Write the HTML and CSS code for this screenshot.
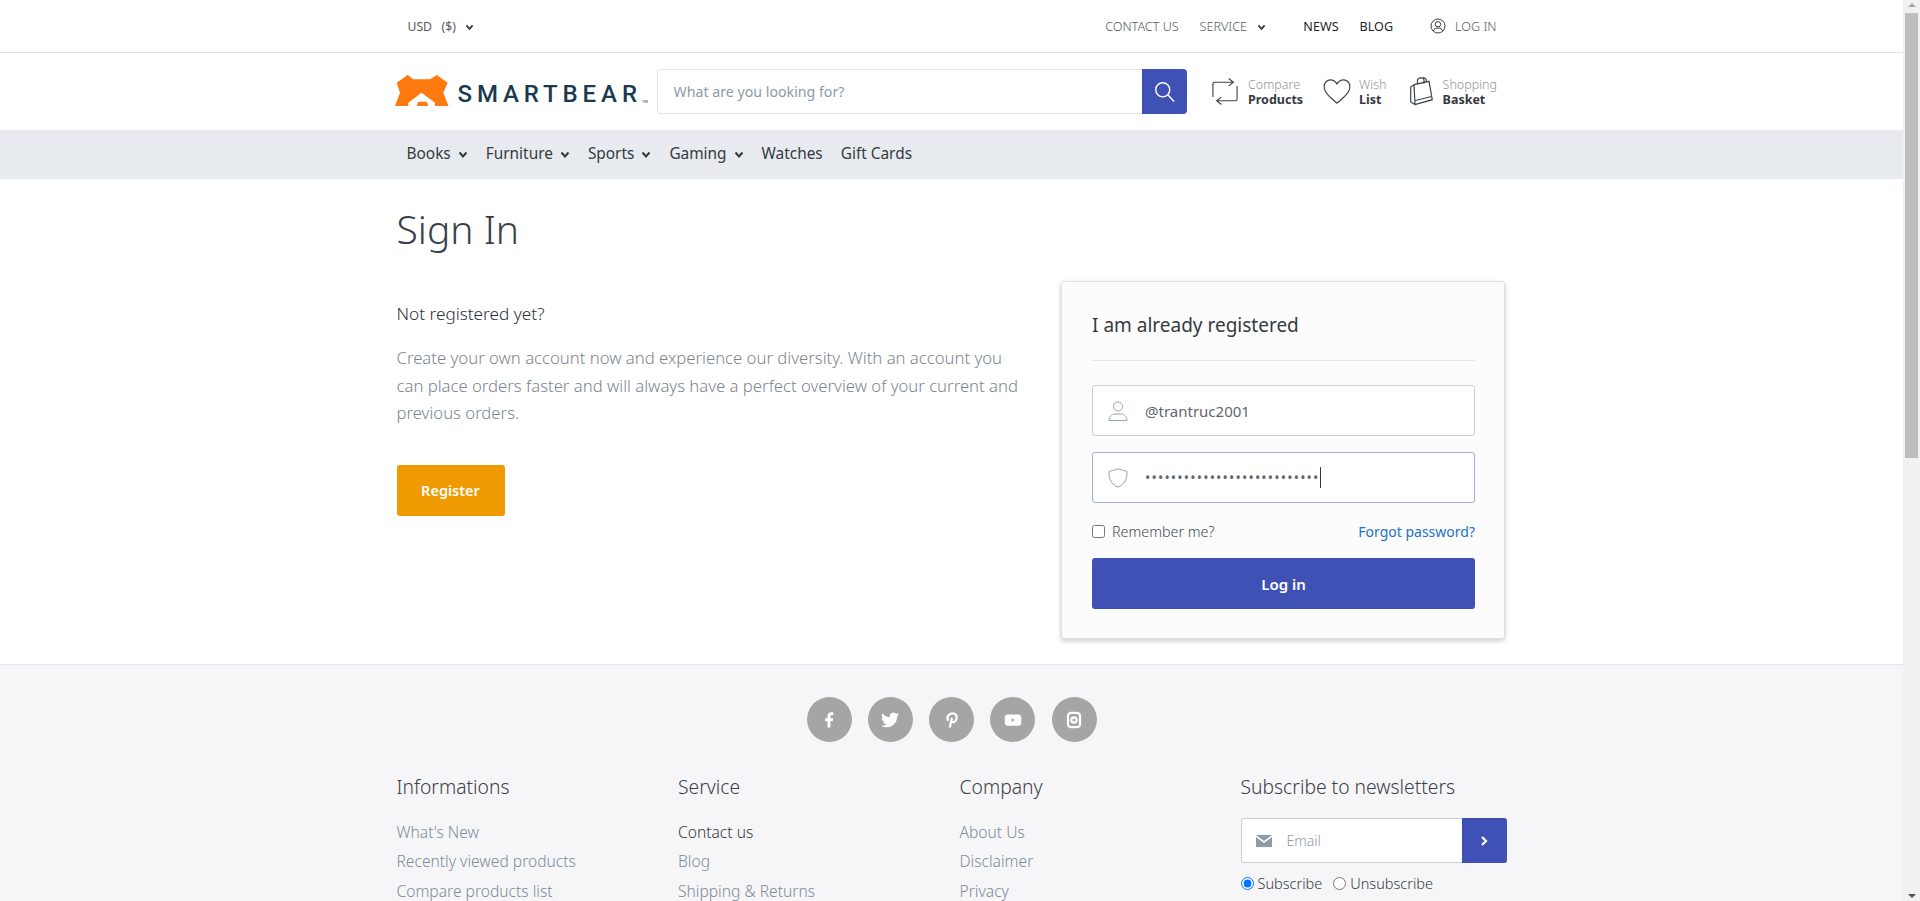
FILE: index.html
```html
<!DOCTYPE html>
<html lang="en">

<head>
    <title>Sign In</title>
    <meta charset="utf-8">
    <meta name="viewport" content="width=device-width, initial-scale=1">
    <link rel="stylesheet" href="styles.css">
</head>

<body>
    <div class="page">
        <div class="topbar">
            <div class="container topbar-row">
                <div class="currency">USD&nbsp;&nbsp;&nbsp;($) <svg class="chev" viewBox="0 0 10 8"><path d="M1.5 1.5 5 5.5l3.5-4"/></svg></div>
                <nav class="toplinks">
                    <a href="#">Contact us</a>
                    <a href="#" class="service">Service <svg class="chev" viewBox="0 0 10 8"><path d="M1.5 1.5 5 5.5l3.5-4"/></svg></a>
                    <a href="#" class="dark news">News</a>
                    <a href="#" class="dark">Blog</a>
                    <a href="#" class="login">
                        <svg class="login-icon" viewBox="0 0 16 16"><circle cx="8" cy="8" r="7"/><circle cx="8" cy="6.3" r="2.7"/><path d="M3.2 13c.8-2.2 2.6-3 4.8-3s4 .8 4.8 3"/></svg>
                        Log in
                    </a>
                </nav>
            </div>
        </div>

        <header class="header">
            <div class="container header-row">
                <a href="#" class="logo">
                    <svg class="bear" viewBox="0 0 54 31"><path fill-rule="evenodd" d="M0 31 5 17.7 1.7 7.7 12.7 0l5.6 4.3H35L41.7 0l11 7.7-4.4 10L53.5 31H40v-3.3L26.5 17.7 13.3 27.7V31zM21.7 31l1.6-4.3h8.4l1.6 4.3z"/></svg>
                    <span class="logo-text">SMARTBEAR</span><span class="tm">TM</span>
                </a>
                <form class="search">
                    <input class="search-input" type="text" placeholder="What are you looking for?">
                    <button class="search-btn" type="button" aria-label="Search">
                        <svg viewBox="0 0 24 24"><circle cx="10" cy="10" r="8"/><path d="m16 16 7 7.5"/></svg>
                    </button>
                </form>
                <div class="shortcuts">
                    <a href="#" class="shortcut compare">
                        <svg viewBox="0 0 28 30"><path d="M22 5H3a2 2 0 0 0-2 2v14M6 25h19a2 2 0 0 0 2-2V9M18 1l5 4-5 4M10 21l-5 4 5 4"/></svg>
                        <span><small>Compare</small><b>Products</b></span>
                    </a>
                    <a href="#" class="shortcut wish">
                        <svg viewBox="0 0 30 28"><path d="M15 26.5C9 21.5 1.2 15.5 1.2 8.6 1.2 4.6 4.3 1.5 8 1.5c3 0 5.6 1.7 7 4.5 1.4-2.8 4-4.5 7-4.5 3.7 0 6.8 3.1 6.8 7.1 0 6.9-7.8 12.900-13.800 17.900z"/></svg>
                        <span><small>Wish</small><b>List</b></span>
                    </a>
                    <a href="#" class="shortcut basket">
                        <svg viewBox="0 0 23 29"><path d="M4 7.7 19 4.3l3.300 18.400L5 27.700.7 25V10zM4 7.700l1 20M5.500 23.500l16-4M7.500 7V3c1-3 6-3 6.500 0v3.500M10 1.500c3-1.500 6-.5 6.200 1.500l.5 2.500"/></svg>
                        <span><small>Shopping</small><b>Basket</b></span>
                    </a>
                </div>
            </div>
        </header>

        <div class="menu">
            <ul class="container menu-list">
                <li><a href="#">Books <svg class="chev" viewBox="0 0 10 8"><path d="M1.5 1.5 5 5.5l3.5-4"/></svg></a></li>
                <li><a href="#">Furniture <svg class="chev" viewBox="0 0 10 8"><path d="M1.5 1.5 5 5.5l3.5-4"/></svg></a></li>
                <li><a href="#">Sports <svg class="chev" viewBox="0 0 10 8"><path d="M1.5 1.5 5 5.5l3.5-4"/></svg></a></li>
                <li><a href="#">Gaming <svg class="chev" viewBox="0 0 10 8"><path d="M1.5 1.5 5 5.5l3.5-4"/></svg></a></li>
                <li><a href="#">Watches</a></li>
                <li><a href="#">Gift Cards</a></li>
            </ul>
        </div>

        <main class="container main">
            <h1>Sign In</h1>
            <div class="columns">
                <section class="register">
                    <h2>Not registered yet?</h2>
                    <p>Create your own account now and experience our diversity. With an account you can place orders faster and will always have a perfect overview of your current and previous orders.</p>
                    <a href="#" class="register-btn">Register</a>
                </section>

                <section class="card">
                    <h3>I am already registered</h3>
                    <label class="field">
                        <svg viewBox="0 0 20 20"><circle cx="10" cy="5.5" r="4.5"/><path d="M1 19.5c0-4 3-6.5 5.500-6.500h7c2.500 0 5.500 2.500 5.500 6.500z"/></svg>
                        <input type="text" value="@trantruc2001">
                    </label>
                    <div class="field focused">
                        <svg viewBox="0 0 20 20"><path d="M10 .8 19 3.500c.3 7.500-2.500 13-9 15.700C3.500 16.500.7 11 1 3.500z"/></svg>
                        <span class="dots">•••••••••••••••••••••••••••</span><span class="caret"></span>
                    </div>
                    <div class="options">
                        <label class="remember"><input type="checkbox"> Remember me?</label>
                        <a href="#" class="forgot">Forgot password?</a>
                    </div>
                    <button class="login-btn" type="button">Log in</button>
                </section>
            </div>
        </main>

        <footer class="footer">
            <div class="socials">
                <a href="#" aria-label="Facebook"><svg viewBox="0 0 24 24"><path d="M14 13.500h3l.6-4H14V7.200c0-1.100.5-1.900 2-1.900h1.700V1.900C17.200 1.800 16 1.700 14.900 1.700 12 1.700 10 3.500 10 6.700v2.800H6.800v4H10V22h4z"/></svg></a>
                <a href="#" aria-label="Twitter"><svg viewBox="0 0 24 24"><path d="M23.953 4.570a10 10 0 01-2.825.775 4.958 4.958 0 002.163-2.723c-.951.555-2.005.959-3.127 1.184a4.920 4.920 0 00-8.384 4.482C7.690 8.095 4.067 6.130 1.640 3.162a4.822 4.822 0 00-.666 2.475c0 1.710.870 3.213 2.188 4.096a4.904 4.904 0 01-2.228-.616v.060a4.923 4.923 0 003.946 4.827 4.996 4.996 0 01-2.212.085 4.936 4.936 0 004.604 3.417 9.867 9.867 0 01-6.102 2.105c-.390 0-.779-.023-1.170-.067a13.995 13.995 0 007.557 2.209c9.053 0 13.998-7.496 13.998-13.985 0-.210 0-.420-.015-.630A9.935 9.935 0 0024 4.590z"/></svg></a>
                <a href="#" aria-label="Pinterest"><svg viewBox="0 0 24 24"><path class="line" d="M9 22l3-13M7 13c-3-5 1-10 5.500-10S19 6 18 10s-4 6-6.500 4"/></svg></a>
                <a href="#" aria-label="YouTube"><svg viewBox="0 0 24 24"><path fill-rule="evenodd" d="M5 4.500h14a4 4 0 0 1 4 4v7a4 4 0 0 1-4 4H5a4 4 0 0 1-4-4v-7a4 4 0 0 1 4-4zM10 9.500v5l4.500-2.500z"/></svg></a>
                <a href="#" aria-label="Instagram"><svg viewBox="0 0 24 24"><rect class="line" x="4" y="2.500" width="16" height="19" rx="4"/><circle class="line" cx="12" cy="12" r="3.500"/></svg></a>
            </div>
            <div class="container footer-cols">
                <div class="footer-col">
                    <h4>Informations</h4>
                    <a href="#">What's New</a>
                    <a href="#">Recently viewed products</a>
                    <a href="#">Compare products list</a>
                </div>
                <div class="footer-col">
                    <h4>Service</h4>
                    <a href="#" class="active">Contact us</a>
                    <a href="#">Blog</a>
                    <a href="#">Shipping &amp; Returns</a>
                </div>
                <div class="footer-col">
                    <h4>Company</h4>
                    <a href="#">About Us</a>
                    <a href="#">Disclaimer</a>
                    <a href="#">Privacy</a>
                </div>
                <div class="footer-col subscribe">
                    <h4>Subscribe to newsletters</h4>
                    <form class="newsletter">
                        <svg viewBox="0 0 16 12"><path d="M0 0h16L8 6z"/><path d="M0 2v10h16V2L8 8z"/></svg>
                        <input type="text" placeholder="Email">
                        <button type="button" aria-label="Subscribe"><svg viewBox="0 0 10 12"><path d="M3 2l4 4-4 4"/></svg></button>
                    </form>
                    <div class="radios">
                        <label><input type="radio" name="sub" checked> Subscribe</label>
                        <label><input type="radio" name="sub"> Unsubscribe</label>
                    </div>
                </div>
            </div>
        </footer>
    </div>

    <div class="scrollbar">
        <span class="arrow-up"></span>
        <div class="track"><div class="thumb"></div></div>
        <span class="arrow-down"></span>
    </div>
</body>

</html>
```

FILE: styles.css
```css
* {
    box-sizing: border-box;
}

html,
body {
    height: 100%;
    margin: 0;
    overflow: hidden;
}

body {
    display: flex;
    font-family: "Noto Sans", "Open Sans", Arial, sans-serif;
    font-size: 15px;
    color: #343a40;
    background: #fff;
}

a {
    color: inherit;
    text-decoration: none;
}

.page {
    flex: 1;
    min-width: 0;
    overflow: hidden;
}

.container {
    width: 1110px;
    margin: 0 auto;
}

.chev {
    width: 9px;
    height: 7px;
    fill: none;
    stroke: currentColor;
    stroke-width: 2;
}

/* Top bar */
.topbar {
    height: 53px;
    border-bottom: 1px solid #dee2e6;
    font-size: 12.6px;
}

.topbar-row {
    display: flex;
    justify-content: space-between;
    align-items: center;
    height: 52px;
    padding: 0 10px 0 11px;
    color: #555b62;
}

.currency {
    font-size: 12.2px;
}

.currency .chev {
    margin-left: 6px;
    color: #343a40;
}

.toplinks {
    display: flex;
    align-items: center;
    font-weight: 300;
    text-transform: uppercase;
}

.toplinks a {
    margin-left: 21px;
}

.toplinks .service .chev {
    margin-left: 7px;
    color: #343a40;
}

.toplinks .news {
    margin-left: 37px;
}

.toplinks .dark {
    color: #212529;
    font-weight: 400;
}

.toplinks .login {
    display: flex;
    align-items: center;
    margin-left: 37px;
}

.login-icon {
    width: 16px;
    height: 16px;
    margin-right: 9px;
    fill: none;
    stroke: #343a40;
}

/* Header */
.header-row {
    display: flex;
    align-items: center;
    height: 77px;
}

.logo {
    display: flex;
    align-items: flex-end;
    width: 262px;
    margin-left: -2px;
    padding-bottom: 3px;
}

.bear {
    width: 54px;
    height: 31px;
    fill: #ff7a0e;
}

.logo-text {
    margin-left: 9px;
    margin-bottom: -1px;
    font-family: "Roboto", sans-serif;
    font-size: 24px;
    font-weight: 500;
    line-height: 25px;
    letter-spacing: 4.9px;
    color: #1b3a4f;
}

.tm {
    font-size: 4px;
    line-height: 8px;
    color: #1b3a4f;
}

.search {
    display: flex;
    width: 530.5px;
    height: 45px;
    margin-top: -1px;
    border: 1px solid #e2e4e8;
    border-radius: 4px;
}

.search-input {
    flex: 1;
    min-width: 0;
    padding: 0 16px;
    border: 0;
    outline: 0;
    background: none;
    font: inherit;
    font-size: 14.2px;
}

.search-input::placeholder,
.newsletter input::placeholder {
    color: #8e99a8;
    opacity: 1;
}

.search-btn {
    width: 45px;
    margin: -1px;
    padding: 0;
    border: 0;
    border-radius: 0 4px 4px 0;
    background: #3f51b5;
}

.search-btn svg {
    width: 21px;
    height: 21px;
    fill: none;
    stroke: #fff;
    stroke-width: 1.6;
    vertical-align: middle;
}

.shortcuts {
    display: flex;
    align-items: center;
    margin-left: 25px;
}

.shortcut {
    display: flex;
    align-items: center;
    font-size: 12.5px;
    line-height: 14.5px;
}

.shortcut span {
    display: flex;
    flex-direction: column;
    margin-top: 2px;
    margin-left: 8px;
}

.shortcut small {
    font-size: 12.5px;
    font-weight: 300;
    color: #8f949a;
}

.shortcut b {
    font-weight: 700;
}

.shortcut svg {
    fill: none;
    stroke: #3d434a;
    stroke-width: 1.2;
}

.compare svg {
    width: 26px;
    height: 29px;
}

.compare span,
.basket span {
    margin-left: 10px;
}

.wish {
    margin-left: 20px;
}

.wish svg {
    width: 28px;
    height: 27px;
}

.basket {
    margin-left: 23px;
}

.basket svg {
    width: 23px;
    height: 29px;
}

/* Category menu */
.menu {
    height: 49px;
    background: #e7eaef;
}

.menu-list {
    display: flex;
    align-items: center;
    gap: 18px;
    height: 49px;
    padding: 0 10px 2px;
    list-style: none;
    font-size: 15.4px;
    color: #343a40;
}

.menu-list .chev {
    width: 10px;
    height: 8px;
    margin-left: 3px;
}

/* Main */
.main {
    height: 485px;
    padding-top: 25px;
}

h1 {
    margin: 0;
    font-size: 39px;
    font-weight: 300;
    line-height: 50px;
    color: #3a4047;
}

.columns {
    display: flex;
    justify-content: space-between;
    margin-top: 27px;
}

.register {
    width: 630px;
    padding-top: 21px;
}

h2 {
    margin: 0;
    font-size: 17.2px;
    font-weight: 300;
    line-height: 24px;
    color: #2b3036;
}

.register p {
    margin: 18px 0 0;
    font-size: 16.7px;
    font-weight: 300;
    line-height: 27.5px;
    color: #7c8590;
}

.register-btn {
    display: inline-block;
    width: 108px;
    height: 51px;
    margin-top: 38px;
    border-radius: 3px;
    background: #ef9a00;
    color: #fff;
    font-size: 14.5px;
    font-weight: 600;
    line-height: 51px;
    text-align: center;
}

.card {
    width: 444px;
    height: 358px;
    margin-right: 1.5px;
    padding: 0 29px 0 30px;
    border: 1px solid #dcdfe3;
    border-radius: 3px;
    background: #fcfcfc;
    box-shadow: 0 2px 5px rgba(0, 0, 0, .2);
}

h3 {
    height: 79px;
    margin: 0 0 24px;
    border-bottom: 1px solid #e3e5e8;
    font-size: 19px;
    font-weight: 400;
    line-height: 86px;
}

.field {
    display: flex;
    align-items: center;
    height: 51px;
    margin-bottom: 16px;
    padding-left: 15px;
    border: 1px solid #c9ced6;
    border-radius: 3px;
    background: #fff;
    font-size: 15px;
    color: #5f666e;
}

.field svg {
    flex: none;
    width: 20px;
    height: 20px;
    fill: none;
    stroke: #98a4b3;
}

.field input {
    flex: 1;
    min-width: 0;
    margin-left: 17px;
    padding: 0;
    border: 0;
    outline: 0;
    background: none;
    font: inherit;
    color: inherit;
}

.field.focused {
    border-color: #a3aee0;
}

.dots {
    margin-left: 17px;
    font-size: 14px;
    letter-spacing: 1.2px;
}

.caret {
    width: 1px;
    height: 21px;
    background: #343a40;
}

.options {
    display: flex;
    justify-content: space-between;
    align-items: center;
    height: 24px;
    font-size: 14px;
}

.remember {
    display: flex;
    align-items: center;
    font-size: 14.3px;
    font-weight: 300;
    color: #444a51;
}

.remember input {
    width: 13px;
    height: 13px;
    margin: 0 7px 0 0;
}

.forgot {
    color: #1a73c4;
}

.login-btn {
    display: block;
    width: 100%;
    height: 51px;
    margin-top: 15px;
    border: 0;
    border-radius: 3px;
    background: #3f51b5;
    color: #fff;
    font: inherit;
    font-size: 15px;
    font-weight: 600;
}

/* Footer */
.footer {
    height: 300px;
    border-top: 1px solid #e3e5e8;
    background: #f6f6f8;
}

.socials {
    display: flex;
    justify-content: center;
    gap: 16.25px;
    padding-top: 32px;
}

.socials a {
    display: flex;
    align-items: center;
    justify-content: center;
    width: 45px;
    height: 45px;
    border-radius: 50%;
    background: #a5a5a5;
}

.socials svg {
    width: 18px;
    height: 18px;
    fill: #fff;
}

.socials .line {
    fill: none;
    stroke: #fff;
    stroke-width: 3;
}

.footer-cols {
    display: grid;
    grid-template-columns: 281.5px 281.5px 281px 266px;
    margin-top: 31px;
}

.footer-col a {
    display: block;
    font-size: 15.6px;
    font-weight: 300;
    line-height: 29.4px;
    color: #7e8a99;
}

.footer-col a.active {
    color: #343a40;
}

h4 {
    margin: 0 0 17px;
    font-size: 19.3px;
    font-weight: 300;
    line-height: 28px;
    color: #3a4047;
}

.newsletter {
    display: flex;
    align-items: center;
    height: 45px;
    padding-left: 14px;
    border: 1px solid #c9ced6;
    border-right: 0;
    border-radius: 3px;
    background: #fff;
}

.newsletter > svg {
    flex: none;
    width: 16px;
    height: 12px;
    fill: #8e99a8;
}

.newsletter input {
    flex: 1;
    min-width: 0;
    margin-left: 15px;
    padding: 0;
    border: 0;
    outline: 0;
    background: none;
    font: inherit;
    font-size: 14px;
    font-weight: 300;
}

.newsletter button {
    flex: none;
    width: 45px;
    height: 45px;
    margin: -1px 0;
    padding: 0;
    border: 0;
    border-radius: 0 3px 3px 0;
    background: #3f51b5;
}

.newsletter button svg {
    width: 10px;
    height: 12px;
    fill: none;
    stroke: #fff;
    stroke-width: 2.2;
    vertical-align: middle;
}

.radios {
    display: flex;
    gap: 11px;
    margin-top: 10px;
    font-size: 14.5px;
    font-weight: 300;
}

.radios label {
    display: flex;
    align-items: center;
    gap: 4px;
}

.radios input {
    width: 13px;
    height: 13px;
    margin: 0;
}

/* Scrollbar column, the window's own is not in the picture */
.scrollbar {
    display: flex;
    flex: none;
    flex-direction: column;
    align-items: center;
    width: 17px;
    background: #f1f1f1;
}

.track {
    flex: 1;
    width: 13px;
    padding-top: 3px;
}

.thumb {
    height: 445px;
    background: #bebebe;
}

.arrow-up,
.arrow-down {
    flex: none;
    width: 0;
    height: 0;
    margin: 3px 0;
    border-left: 4px solid transparent;
    border-right: 4px solid transparent;
}

.arrow-up {
    border-bottom: 4px solid #a3a3a3;
}

.arrow-down {
    border-top: 4px solid #505050;
}
```
